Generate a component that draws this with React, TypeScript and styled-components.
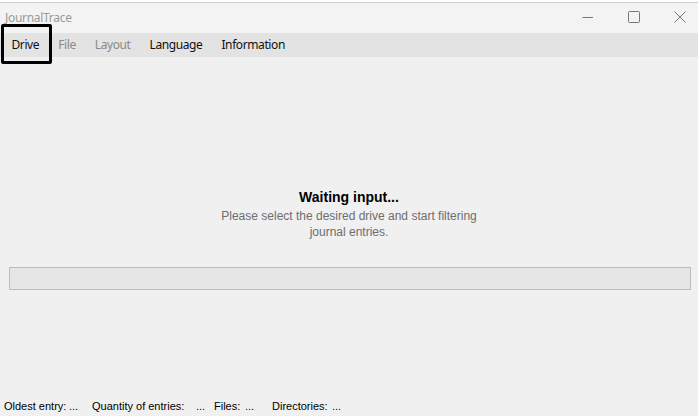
import React from "react";
import styled, { createGlobalStyle } from "styled-components";

const Global = createGlobalStyle`
  html, body { margin: 0; padding: 0; background: #f0f0f0; }
  body { width: 698px; height: 416px; overflow: hidden; }
  #root { height: 416px; }
`;

const Window = styled.div`
  display: flex;
  flex-direction: column;
  width: 698px;
  height: 416px;
  background: #f0f0f0;
  overflow: hidden;
`;

const TopEdge = styled.div`
  height: 2px;
  background: #ffffff;
  border-bottom: 1px solid #cfcfcf;
`;

const TitleBar = styled.div`
  display: flex;
  align-items: center;
  height: 30px;
  background: #f3f3f3;
`;

const Title = styled.span`
  flex: 1;
  padding-left: 5px;
  font-family: "Noto Sans", sans-serif;
  font-size: 12px;
  color: #9a9a9a;
  letter-spacing: -0.3px;
  margin-top: -2px;
`;

const Controls = styled.div`
  display: flex;
  margin-top: -2px;
  margin-right: -5px;
`;

const CtrlButton = styled.div`
  width: 46px;
  height: 30px;
  display: flex;
  align-items: center;
  justify-content: center;
`;

const MenuBar = styled.nav`
  display: flex;
  align-items: center;
  height: 24px;
  background: #e3e3e3;
  padding-left: 2px;
`;

const MenuItem = styled.div<{ $dim?: boolean; $focus?: boolean }>`
  position: relative;
  padding: 0 9.5px;
  height: 24px;
  line-height: 24px;
  font-family: "Noto Sans", sans-serif;
  font-size: 12px;
  letter-spacing: -0.4px;
  color: ${(p) => (p.$dim ? "#8a8a8a" : "#111111")};
  &::after {
    content: "";
    display: ${(p) => (p.$focus ? "block" : "none")};
    position: absolute;
    left: -1px;
    top: -9px;
    right: -3px;
    bottom: -7px;
    border: 3px solid #000;
    border-radius: 2px;
  }
`;

const Main = styled.main`
  flex: 1;
  display: flex;
  flex-direction: column;
  align-items: center;
  padding-top: 131px;
`;

const Heading = styled.div`
  font-family: "Liberation Sans", Arial, sans-serif;
  font-weight: bold;
  font-size: 14px;
  line-height: 18px;
  color: #000;
`;

const Subtitle = styled.div`
  margin-top: 2px;
  width: 280px;
  text-align: center;
  font-family: "Liberation Sans", Arial, sans-serif;
  font-size: 12px;
  line-height: 16px;
  color: #6d6d6d;
`;

const Progress = styled.div`
  align-self: stretch;
  margin: 27px 7px 0 9px;
  height: 21px;
  background: #e6e6e6;
  border: 1px solid #bcbcbc;
`;

const StatusBar = styled.footer`
  display: flex;
  height: 20px;
  line-height: 20px;
  padding-left: 4px;
  font-family: "Liberation Sans", Arial, sans-serif;
  font-size: 11px;
  color: #000;
  white-space: pre;
`;

const StatusItem = styled.span<{ $w: number }>`
  display: flex;
  width: ${(p) => p.$w}px;
`;

const StatusLabel = styled.span<{ $w: number }>`
  width: ${(p) => p.$w}px;
`;

const Minimize = () => (
  <svg width="12" height="12" viewBox="0 0 12 12">
    <line x1="0.5" y1="6.5" x2="11" y2="6.5" stroke="#777" strokeWidth="1" />
  </svg>
);

const Maximize = () => (
  <svg width="12" height="12" viewBox="0 0 12 12">
    <rect x="0.5" y="0.5" width="11" height="11" rx="1" fill="none" stroke="#777" strokeWidth="1" />
  </svg>
);

const Close = () => (
  <svg width="12" height="12" viewBox="0 0 12 12">
    <path d="M0.5 0.5 L11.5 11.5 M11.5 0.5 L0.5 11.5" stroke="#777" strokeWidth="1" />
  </svg>
);

const status = [
  { label: "Oldest entry:", w: 88, lw: 65 },
  { label: "Quantity of entries:", w: 122, lw: 104 },
  { label: "Files:", w: 58, lw: 31 },
  { label: "Directories:", w: 80, lw: 60 },
];

export default function App() {
  return (
    <>
      <Global />
      <Window>
        <TopEdge />
        <TitleBar>
          <Title>JournalTrace</Title>
          <Controls>
            <CtrlButton><Minimize /></CtrlButton>
            <CtrlButton><Maximize /></CtrlButton>
            <CtrlButton><Close /></CtrlButton>
          </Controls>
        </TitleBar>
        <MenuBar>
          <MenuItem $focus>Drive</MenuItem>
          <MenuItem $dim>File</MenuItem>
          <MenuItem $dim>Layout</MenuItem>
          <MenuItem>Language</MenuItem>
          <MenuItem>Information</MenuItem>
        </MenuBar>
        <Main>
          <Heading>Waiting input...</Heading>
          <Subtitle>Please select the desired drive and start filtering journal entries.</Subtitle>
          <Progress />
        </Main>
        <StatusBar>
          {status.map((s) => (
            <StatusItem key={s.label} $w={s.w}>
              <StatusLabel $w={s.lw}>{s.label}</StatusLabel>
              <span>...</span>
            </StatusItem>
          ))}
        </StatusBar>
      </Window>
    </>
  );
}
